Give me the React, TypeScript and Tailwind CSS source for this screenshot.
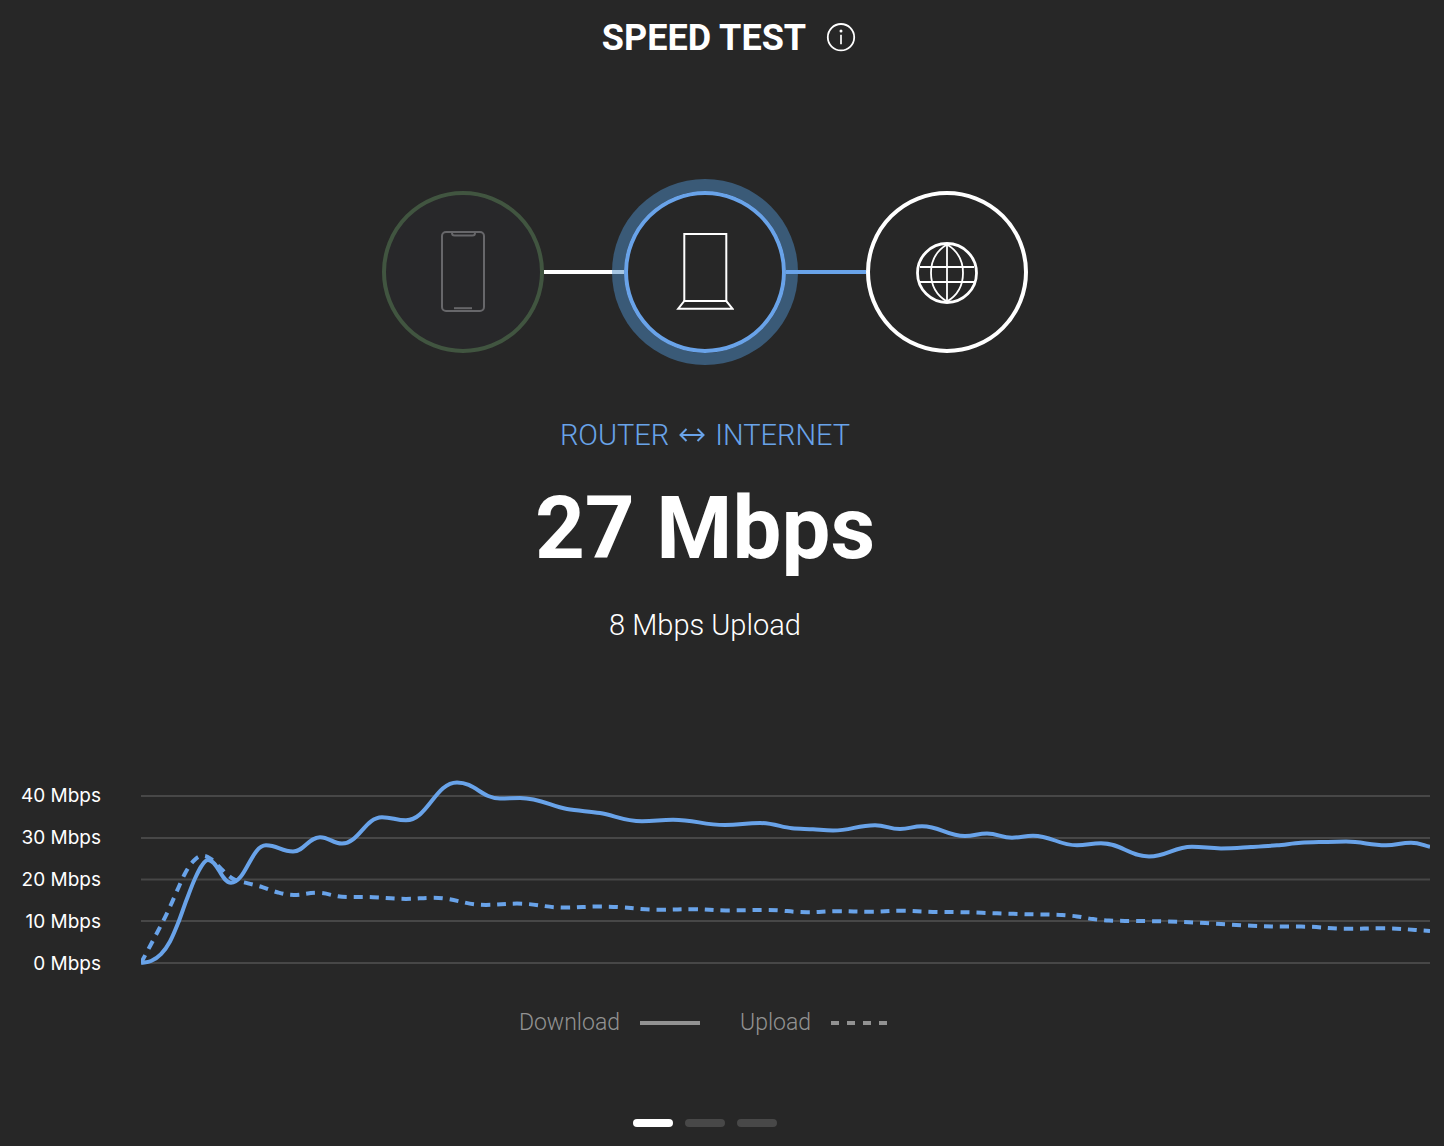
import { useState } from 'react';

type Point = [number, number];

const CHART_WIDTH = 1289;
const CHART_HEIGHT = 200;

const SCALE = [
  { label: '40 Mbps', y: 26 },
  { label: '30 Mbps', y: 68 },
  { label: '20 Mbps', y: 109.5 },
  { label: '10 Mbps', y: 151 },
  { label: '0 Mbps', y: 193 },
];

const DOWNLOAD: Point[] = [
  [0, 193], [10, 191], [20, 184.2], [29, 171.5], [37, 153.3], [45.5, 130], [54, 108.5],
  [60.5, 96], [67, 90], [90, 112.7], [125, 75.3], [152, 81.5], [179, 67.2], [201, 73.5],
  [241, 47.2], [265, 50.3], [316, 12.4], [359, 28.5], [379, 27.9],
  [426, 39], [459, 43], [501, 51.3], [532, 49.7], [584, 55], [619, 53], [651, 58.3],
  [672, 59.2], [692, 60.6], [734, 55.2], [759, 59], [781, 56.2], [824, 66], [846, 63.5],
  [871, 67.7], [892, 65.7], [936, 75.3], [960, 73.2], [1008, 86.4], [1051, 76.8],
  [1080, 78.4], [1110, 77], [1136, 75.3], [1160, 72.8], [1183, 72], [1205, 71.6],
  [1245, 75.2], [1270, 72.7], [1289, 76.7],
];

const UPLOAD: Point[] = [
  [0, 193], [9.5, 175.2], [17, 161], [24.5, 146.3], [31, 132.3], [37.5, 117.5], [44, 103.5],
  [53, 90.5], [62, 85.8], [70, 89], [80, 98.7], [91, 108.3], [107, 113.3], [122, 117.3],
  [137, 122.5], [153, 124.9], [176, 122.8], [201, 126.8], [232, 127.2], [265, 128.9],
  [292, 127.8], [345, 134.9], [376, 133.6], [424, 137.6], [459, 136.5], [521, 139.7],
  [552, 139.2], [585, 140.4], [626, 140], [666, 142.2], [696, 141.2], [729, 141.7],
  [759, 140.8], [792, 141.9], [826, 142.3], [856, 143.3], [889, 144.3], [921, 145],
  [936, 146.4], [952, 149.1], [968, 150.6], [1000, 151], [1048, 152.2], [1080, 154],
  [1111, 155.7], [1143, 156.6], [1160, 156.6], [1206, 158.8], [1240, 158.3], [1289, 161],
];

// Monotone cubic, so the curve never overshoots a sample. Peaks and dips get
// longer handles to keep them round.
function toPath(points: Point[]) {
  const slopes = points.map(([x, y], i) => {
    const prev = points[i - 1];
    const next = points[i + 1];
    if (!prev) return (next[1] - y) / (next[0] - x);
    if (!next) return (y - prev[1]) / (x - prev[0]);
    const h0 = x - prev[0];
    const h1 = next[0] - x;
    const s0 = (y - prev[1]) / h0;
    const s1 = (next[1] - y) / h1;
    if (s0 * s1 <= 0) return 0;
    const p = (s0 * h1 + s1 * h0) / (h0 + h1);
    return Math.sign(s0) * Math.min(3 * Math.abs(s0), 3 * Math.abs(s1), Math.abs(p));
  });

  let d = `M${points[0][0]},${points[0][1]}`;
  for (let i = 1; i < points.length; i++) {
    const [x0, y0] = points[i - 1];
    const [x1, y1] = points[i];
    const dx0 = (x1 - x0) * (slopes[i - 1] === 0 ? 0.42 : 0.33);
    const dx1 = (x1 - x0) * (slopes[i] === 0 ? 0.42 : 0.33);
    d += `C${x0 + dx0},${y0 + dx0 * slopes[i - 1]},${x1 - dx1},${y1 - dx1 * slopes[i]},${x1},${y1}`;
  }
  return d;
}

function InfoIcon() {
  return (
    <svg width="30" height="30" viewBox="0 0 30 30" fill="none" aria-hidden="true">
      <circle cx="15" cy="14.2" r="13.2" stroke="white" strokeWidth="1.8" />
      <circle cx="15" cy="8" r="1.5" fill="white" />
      <path d="M15 11.7V21.2" stroke="white" strokeWidth="1.7" />
    </svg>
  );
}

function PhoneIcon() {
  return (
    <svg width="44" height="82" viewBox="0 0 44 82" fill="none" stroke="#67676a" strokeWidth="2" aria-hidden="true">
      <rect x="1" y="1" width="42" height="79" rx="4" />
      <path d="M11 1v1q0 2.500 2.500 2.500h18q2.500 0 2.500-2.500V1" />
      <path d="M13 77.200h18" />
    </svg>
  );
}

function RouterIcon() {
  return (
    <svg width="58" height="78" viewBox="0 0 58 78" fill="none" stroke="white" strokeWidth="2" aria-hidden="true">
      <path d="M8.300 68V1H50.300V68" />
      <path d="M8.300 68H50.300L56.500 75.700H2.200Z" />
    </svg>
  );
}

function GlobeIcon() {
  return (
    <svg width="62" height="64" viewBox="0 0 62 64" fill="none" stroke="white" strokeWidth="1.8" aria-hidden="true">
      <circle cx="31" cy="33" r="29.5" strokeWidth="2.8" />
      <path d="M31 4v58M4 27h54M4 42h54" />
      <path d="M31 4.500C20 11 15 21 15 33s5 22 16 28.500M31 4.500C42 11 47 21 47 33s-5 22-16 28.500" />
    </svg>
  );
}

function Header() {
  return (
    <header className="grid grid-cols-[1fr_auto_1fr] items-center gap-5 pr-9">
      <h1 className="col-start-2 text-[36px] leading-[44px] font-bold">SPEED TEST</h1>
      <button type="button" aria-label="About the speed test" className="justify-self-start">
        <InfoIcon />
      </button>
    </header>
  );
}

function Route() {
  return (
    <div className="flex items-center justify-center">
      <div className="flex size-[162px] items-center justify-center rounded-full border-4 border-[#415540] bg-[#28282a]">
        <PhoneIcon />
      </div>
      <div className="h-1 w-20 bg-white" />
      <div className="relative flex size-[162px] items-center justify-center rounded-full border-4 border-[#69a3e9] shadow-[0_0_0_12px_rgba(78,141,200,0.5)]">
        <RouterIcon />
      </div>
      <div className="relative h-1 w-20 bg-[#69a3e9]" />
      <div className="flex size-[162px] items-center justify-center rounded-full border-4 border-white">
        <GlobeIcon />
      </div>
    </div>
  );
}

function Result() {
  return (
    <section className="flex flex-col items-center">
      <h2 className="flex items-center gap-2.5 text-[29px] leading-10 font-light text-[#69a3e9]">
        ROUTER
        <svg width="26" height="14" viewBox="0 0 26 14" fill="none" stroke="currentColor" strokeWidth="2" role="img" aria-label="to">
          <path d="M2 7h22M7.500 1L1.500 7l6 6M18.500 1l6 6-6 6" />
        </svg>
        INTERNET
      </h2>
      <p className="mt-5 text-[87px] leading-[106px] font-bold">27 Mbps</p>
      <p className="mt-6 text-[29px] leading-10 font-light">8 Mbps Upload</p>
    </section>
  );
}

function Chart() {
  return (
    <div className="flex gap-10 pr-3.5">
      <ul className="flex h-[202px] w-[101px] shrink-0 flex-col justify-between pt-[18px] text-right font-[Inter,sans-serif] text-[19px] leading-4">
        {SCALE.map((tick) => (
          <li key={tick.label}>{tick.label}</li>
        ))}
      </ul>
      <svg
        className="h-[200px] min-w-0 flex-1"
        viewBox={`0 0 ${CHART_WIDTH} ${CHART_HEIGHT}`}
        preserveAspectRatio="none"
        fill="none"
        role="img"
        aria-label="Download and upload speed over time"
      >
        {SCALE.map((tick) => (
          <path key={tick.y} d={`M0,${tick.y}H${CHART_WIDTH}`} stroke="#474747" strokeWidth="2" />
        ))}
        <path
          d={toPath(UPLOAD)}
          stroke="#69a3e9"
          strokeWidth="4"
          strokeDasharray="9 7"
          vectorEffect="non-scaling-stroke"
        />
        <path d={toPath(DOWNLOAD)} stroke="#69a3e9" strokeWidth="4" vectorEffect="non-scaling-stroke" />
      </svg>
    </div>
  );
}

function Legend() {
  return (
    <div className="flex items-center justify-center gap-10 text-[23px] leading-8 font-light text-[#929292]">
      <div className="flex items-center gap-5">
        Download
        <span className="h-1 w-[60px] bg-[#929292]" />
      </div>
      <div className="flex items-center gap-5">
        Upload
        <svg width="60" height="4" viewBox="0 0 60 4" stroke="#929292" aria-hidden="true">
          <path d="M0 2h60" strokeWidth="4" strokeDasharray="8 8" />
        </svg>
      </div>
    </div>
  );
}

const PAGES = ['Speed test', 'History', 'Details'];

function Pager() {
  const [active, setActive] = useState(0);

  return (
    <nav className="flex justify-center gap-3">
      {PAGES.map((page, i) => (
        <button
          key={page}
          type="button"
          aria-label={page}
          onClick={() => setActive(i)}
          className={`h-2 w-10 rounded-full ${i === active ? 'bg-white' : 'bg-[#484848]'}`}
        />
      ))}
    </nav>
  );
}

export default function App() {
  return (
    <main className="min-h-screen bg-[#272727] pt-4 pb-4 font-[Roboto,sans-serif] text-white">
      <Header />
      <div className="pt-[131px] pr-[34px]">
        <Route />
      </div>
      <div className="pt-[62px] pr-[34px]">
        <Result />
      </div>
      <div className="pt-[125px]">
        <Chart />
      </div>
      <div className="pt-[35px] pr-[34px]">
        <Legend />
      </div>
      <div className="pt-20 pr-[34px]">
        <Pager />
      </div>
    </main>
  );
}
